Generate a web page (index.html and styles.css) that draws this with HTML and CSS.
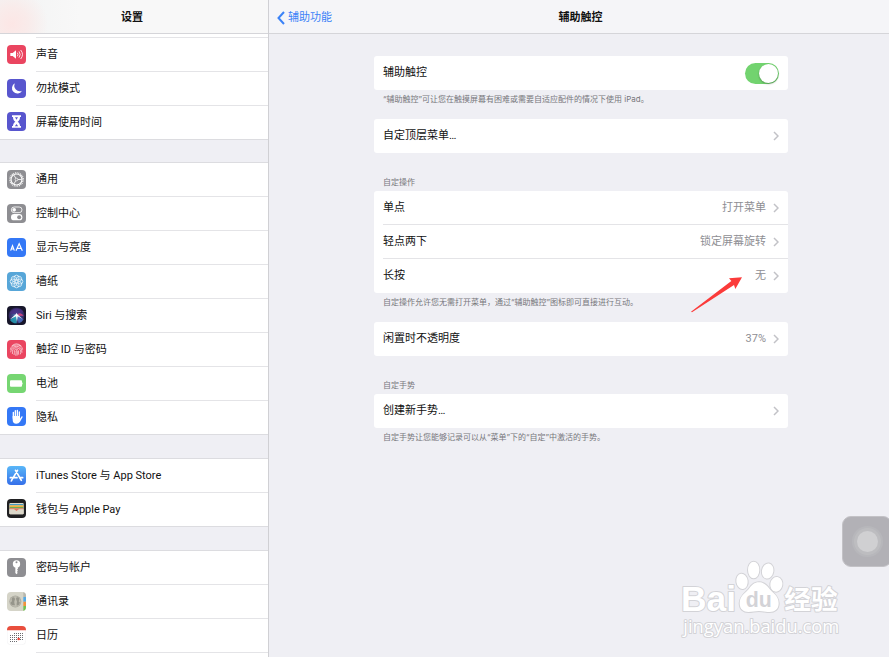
FILE: index.html
```html
<!DOCTYPE html>
<html lang="zh-CN">
<head>
<meta charset="utf-8">
<meta name="viewport" content="width=device-width, initial-scale=1">
<title>设置</title>
<link rel="stylesheet" href="styles.css">
</head>
<body>
<div class="app">
  <nav class="sidebar" aria-label="设置">
    <header class="bar bar-side"><h1 class="bar-title">设置</h1></header>
    <div class="list">
      <div class="group group-first">
        <div class="row-rest"></div>
        <a class="item" href="#"><svg class="icon" viewBox="0 0 57 57"><rect width="57" height="57" rx="12" fill="#ea4560"/><path d="M10 24h7l10-8v25l-10-8h-7z" fill="#fff"/><path d="M31 23q4 5.500 0 11M36 19q7 9.500 0 19M41 15q11 13.500 0 27" fill="none" stroke="#fff" stroke-width="2.500"/></svg><span class="item-label">声音</span></a>
        <a class="item" href="#"><svg class="icon" viewBox="0 0 57 57"><rect width="57" height="57" rx="12" fill="#5856ce"/><path d="M24 13A16 16 0 1 0 45 35 16 16 0 0 1 24 13z" fill="#fff"/></svg><span class="item-label">勿扰模式</span></a>
        <a class="item" href="#"><svg class="icon" viewBox="0 0 57 57"><rect width="57" height="57" rx="12" fill="#5856ce"/><path d="M15 10h27v5h-3c0 8-3 11-7 14 4 3 7 7 7 13h3v5H15v-5h3c0-6 3-10 7-13-4-3-7-6-7-14h-3z" fill="#fff"/><path d="M24 16h9l-4.500 7zM28.500 36l5 7h-10z" fill="#5856ce"/></svg><span class="item-label">屏幕使用时间</span></a>
      </div>
      <div class="group">
        <a class="item" href="#"><svg class="icon" viewBox="0 0 57 57"><rect width="57" height="57" rx="12" fill="#8e8e92"/><g fill="none" stroke="#fff"><circle cx="28.500" cy="28.500" r="20" stroke-width="4" stroke-dasharray="2.600 2.640"/><circle cx="28.500" cy="28.500" r="16.500" stroke-width="3.500"/><circle cx="28.500" cy="28.500" r="4" stroke-width="2"/><path d="M32.500 28.500H44M26.500 25l-6-10M26.500 32l-6 10" stroke-width="2.500"/></g></svg><span class="item-label">通用</span></a>
        <a class="item" href="#"><svg class="icon" viewBox="0 0 57 57"><rect width="57" height="57" rx="12" fill="#8e8e92"/><rect x="13" y="9" width="32" height="17" rx="8.500" fill="none" stroke="#fff" stroke-width="2.500"/><circle cx="21.500" cy="17.500" r="5.500" fill="#fff"/><rect x="12" y="30" width="34" height="19" rx="9.500" fill="#fff"/><circle cx="36.500" cy="39.500" r="6" fill="#8e8e92"/></svg><span class="item-label">控制中心</span></a>
        <a class="item" href="#"><svg class="icon" viewBox="0 0 57 57"><rect width="57" height="57" rx="12" fill="#3478f6"/><path d="M11 38l5.500-15L22 38M13 33h7M27 38l9.500-21L46 38M30 31h13" fill="none" stroke="#fff" stroke-width="3.500"/></svg><span class="item-label">显示与亮度</span></a>
        <a class="item" href="#"><svg class="icon" viewBox="0 0 57 57"><rect width="57" height="57" rx="12" fill="#57a6d8"/><g fill="none" stroke="#fff" stroke-width="2"><circle cx="28.500" cy="17" r="7.500"/><circle cx="36.500" cy="20.500" r="7.500"/><circle cx="40" cy="28.500" r="7.500"/><circle cx="36.500" cy="36.500" r="7.500"/><circle cx="28.500" cy="40" r="7.500"/><circle cx="20.500" cy="36.500" r="7.500"/><circle cx="17" cy="28.500" r="7.500"/><circle cx="20.500" cy="20.500" r="7.500"/></g></svg><span class="item-label">墙纸</span></a>
        <a class="item" href="#"><svg class="icon" viewBox="0 0 57 57"><defs><radialGradient id="siri"><stop offset="0" stop-color="#7dc4d8"/><stop offset=".45" stop-color="#3d4a8c"/><stop offset=".85" stop-color="#372c66"/><stop offset="1" stop-color="#1b1933"/></radialGradient></defs><rect width="57" height="57" rx="12" fill="#17162a"/><circle cx="28.500" cy="28.500" r="25" fill="url(#siri)"/><path d="M8 22C16 6 38 3 49 18L30 26z" fill="#4b2f86" opacity=".8"/><path d="M29 27L9 42q8 11 20 10z" fill="#1eb5c0" opacity=".7"/><path d="M29 27l6 25q10-2 15-12z" fill="#4f7ad0" opacity=".7"/><path d="M32 24q10-7 18 5l-16 1z" fill="#e3427e" opacity=".8"/><path d="M29 21l3 5 15 13-15-8-2 17-3-17-18 9 16-14z" fill="#fff"/></svg><span class="item-label">Siri 与搜索</span></a>
        <a class="item" href="#"><svg class="icon" viewBox="0 0 57 57"><rect width="57" height="57" rx="12" fill="#ea4560"/><g fill="none" stroke="#fff" stroke-width="1.800"><path d="M14 18q14-13 29 0M10 29q2-13 18-14t19 14M11 37q2-18 17-18 17 0 17 19M16 42q1-8 1-12 3-8 11-7 12 1 13 10 1 5-1 10M21 45q2-8 1-14 3-6 9-3 5 2 4 16M26 47q2-8 1-15 3-1 4 3 0 8-1 12"/></g></svg><span class="item-label">触控 ID 与密码</span></a>
        <a class="item" href="#"><svg class="icon" viewBox="0 0 57 57"><rect width="57" height="57" rx="12" fill="#76d672"/><rect x="9" y="19" width="36" height="19" rx="3" fill="#fff"/><path d="M46 24q4 4.500 0 9z" fill="#fff"/></svg><span class="item-label">电池</span></a>
        <a class="item" href="#"><svg class="icon" viewBox="0 0 57 57"><rect width="57" height="57" rx="12" fill="#3478f6"/><path d="M19 34V16M25 31V11M31 31V10M37 32V15" stroke="#fff" stroke-width="4" stroke-linecap="round"/><path d="M17 27h22v8l5-7q3-1 3 2l-8 14q-4 6-11 6-11 0-11-12z" fill="#fff"/></svg><span class="item-label">隐私</span></a>
      </div>
      <div class="group">
        <a class="item" href="#"><svg class="icon" viewBox="0 0 57 57"><defs><linearGradient id="store" x2="0" y2="1"><stop stop-color="#59b7f8"/><stop offset="1" stop-color="#356fe9"/></linearGradient></defs><rect width="57" height="57" rx="12" fill="url(#store)"/><path d="M31.500 13L17 38M25.500 13L43 43M10 35h20M38 35h9M15 41l-2 4" fill="none" stroke="#fff" stroke-width="5" stroke-linecap="round"/></svg><span class="item-label">iTunes Store 与 App Store</span></a>
        <a class="item" href="#"><svg class="icon" viewBox="0 0 57 57"><rect width="57" height="57" rx="12" fill="#202022"/><rect x="7" y="12" width="43" height="34" rx="3" fill="#ddd8c9"/><path d="M8 15h41v4H8z" fill="#459ac4"/><path d="M8 19h41v5H8z" fill="#edb23e"/><path d="M8 24h41v4H8z" fill="#6cad57"/><path d="M8 28h41v4H8z" fill="#e66e58"/><path d="M7 31h14q2 0 3 2 4 4 9 0 1-2 3-2h14v12q0 3-3 3H10q-3 0-3-3z" fill="#dcd8ca"/><path d="M22 31h13l-6.500 5z" fill="#e66e58"/></svg><span class="item-label">钱包与 Apple Pay</span></a>
      </div>
      <div class="group">
        <a class="item" href="#"><svg class="icon" viewBox="0 0 57 57"><rect width="57" height="57" rx="12" fill="#8e8e92"/><circle cx="28.500" cy="18" r="11" fill="#fff"/><circle cx="28.500" cy="13" r="3" fill="#8e8e92"/><path d="M25 27h7l1 5-3 3 3 3-3 3 2 4-3.500 4-3.500-4z" fill="#fff"/></svg><span class="item-label">密码与帐户</span></a>
        <a class="item" href="#"><svg class="icon" viewBox="0 0 57 57"><defs><clipPath id="book"><rect width="57" height="57" rx="12"/></clipPath></defs><g clip-path="url(#book)"><path d="M0 0h57v57H0z" fill="#d5d4c8"/><path d="M49 0h8v15h-8z" fill="#b8b7ad"/><path d="M49 15h8v14h-8z" fill="#53a9e4"/><path d="M49 29h8v13h-8z" fill="#f0923d"/><path d="M49 42h8v15h-8z" fill="#71c151"/><circle cx="25" cy="28.500" r="18" fill="#aaa99e"/><circle cx="25" cy="28.500" r="15.500" fill="#c0beb2"/><path d="M14 22q0-6 5-6t5 6l-2 6v5l2 7h-9q-5-5-4-9l4-3zM27 20q1-5 6-4 5 1 4 7l-2 5 4 4q-3 9-10 9v-7l1-5z" fill="#96958b"/></g></svg><span class="item-label">通讯录</span></a>
        <a class="item" href="#"><svg class="icon" viewBox="0 0 57 57"><rect x=".5" y=".5" width="56" height="56" rx="12" fill="#fff" stroke="#e5e5e7"/><path d="M0 12Q0 0 12 0h33q12 0 12 12v1H0z" fill="#e94e3d"/><path d="M21 22.500h27M9 28.500h39M9 34.500h39M9 40.500h39M9 46.500h21" stroke="#6c6c70" stroke-width="3" stroke-dasharray="3 3"/><circle cx="35" cy="39" r="4" fill="#ee4438"/></svg><span class="item-label">日历</span></a>
        <a class="item" href="#"><span class="icon"></span><span class="item-label"></span></a>
      </div>
    </div>
  </nav>

  <main class="detail">
    <header class="bar bar-detail">
      <a class="back" href="#"><svg class="back-arrow" viewBox="0 0 8 14"><path d="M7 1L1.500 7 7 13" fill="none" stroke="currentColor" stroke-width="2"/></svg>辅助功能</a>
      <h2 class="bar-title">辅助触控</h2>
    </header>
    <div class="content">
      <section class="section">
        <div class="card">
          <div class="cell"><label for="assistive">辅助触控</label><input class="switch" id="assistive" type="checkbox" role="switch" checked></div>
        </div>
        <p class="note">“辅助触控”可让您在触摸屏幕有困难或需要自适应配件的情况下使用 iPad。</p>
      </section>
      <section class="section">
        <div class="card">
          <button class="cell" type="button"><span>自定顶层菜单…</span><svg class="chevron" viewBox="0 0 6 10"><path d="M1 1l4 4-4 4"/></svg></button>
        </div>
      </section>
      <section class="section">
        <h3 class="caption">自定操作</h3>
        <div class="card">
          <button class="cell" type="button"><span>单点</span><span class="value">打开菜单</span><svg class="chevron" viewBox="0 0 6 10"><path d="M1 1l4 4-4 4"/></svg></button>
          <button class="cell" type="button"><span>轻点两下</span><span class="value">锁定屏幕旋转</span><svg class="chevron" viewBox="0 0 6 10"><path d="M1 1l4 4-4 4"/></svg></button>
          <button class="cell" type="button"><span>长按</span><span class="value">无</span><svg class="chevron" viewBox="0 0 6 10"><path d="M1 1l4 4-4 4"/></svg></button>
          <svg class="pointer" viewBox="0 0 153 108"><path d="M153 1l-20 35-4-12L3 106l-3-2L121 12l-7-8z" fill="#fb3b3a"/></svg>
        </div>
        <p class="note">自定操作允许您无需打开菜单，通过“辅助触控”图标即可直接进行互动。</p>
      </section>
      <section class="section">
        <div class="card">
          <button class="cell" type="button"><span>闲置时不透明度</span><span class="value">37%</span><svg class="chevron" viewBox="0 0 6 10"><path d="M1 1l4 4-4 4"/></svg></button>
        </div>
      </section>
      <section class="section">
        <h3 class="caption">自定手势</h3>
        <div class="card">
          <button class="cell" type="button"><span>创建新手势…</span><svg class="chevron" viewBox="0 0 6 10"><path d="M1 1l4 4-4 4"/></svg></button>
        </div>
        <p class="note">自定手势让您能够记录可以从“菜单”下的“自定”中激活的手势。</p>
      </section>
    </div>
  </main>

  <button class="touch" type="button" aria-label="辅助触控"><span class="touch-dot"></span></button>

  <svg class="mark" viewBox="60 180 492 240">
    <g class="mark-shape">
      <text class="mark-bai" x="63" y="332">Bai</text>
      <ellipse cx="246" cy="244" rx="17" ry="23" transform="rotate(-8 246 244)"/>
      <ellipse cx="281" cy="210" rx="17" ry="25"/>
      <ellipse cx="323" cy="213" rx="17" ry="23" transform="rotate(10 323 213)"/>
      <ellipse cx="349" cy="253" rx="18" ry="22" transform="rotate(10 349 253)"/>
      <path d="M297 247c-14 0-22 8-29 18-8 12-29 21-29 45 0 18 12 26 26 26 12 0 20-3 32-3s20 3 32 3c15 0 27-8 27-26 0-24-21-33-29-45-7-10-16-18-30-18z"/>
      <text class="mark-cn" x="373" y="328">经验</text>
      <text class="mark-url" x="70" y="398">jingyan.baidu.com</text>
    </g>
    <text class="mark-du" x="257" y="322">du</text>
  </svg>
</div>
</body>
</html>
```
FILE: styles.css
```css
* { box-sizing: border-box; }

body {
  margin: 0;
  font-family: Roboto, "Noto Sans CJK SC", sans-serif;
  font-size: 11px;
  line-height: 16px;
  color: #111;
  background: #efeff4;
}

h1, h2, h3, p { margin: 0; font-size: inherit; font-weight: inherit; }
a { color: inherit; text-decoration: none; }

.app {
  position: relative;
  display: grid;
  grid-template-columns: 269px 1fr;
  height: 100vh;
  overflow: hidden;
}

.bar {
  display: grid;
  align-items: center;
  height: 34px;
  padding-top: 2px;
  border-bottom: 1px solid #d5d5d9;
  background: #f5f5f8;
}
.bar-title { font-weight: 700; text-align: center; }

.sidebar {
  min-height: 0;
  overflow: hidden;
  border-right: 1px solid #d0d0d4;
}
.bar-side {
  padding-right: 4px;
  background: radial-gradient(circle at 12px 24px, #fce6e5 0, #f9ebea 16px, transparent 36px), linear-gradient(90deg, #f2f3f3, #f8f8f8 80px);
}

.group {
  margin-bottom: 23px;
  border-top: 1px solid #dcdce0;
  background: #fff;
}
.group-first {
  margin-bottom: 22px;
  border-top: 0;
}
.row-rest {
  height: 4px;
  margin-left: 36px;
  border-bottom: 1px solid #e4e4e7;
}

.item {
  display: flex;
  align-items: center;
  gap: 10px;
  height: 34px;
  padding-left: 7px;
}
.item:last-child { border-bottom: 1px solid #dcdce0; }
.icon {
  flex: none;
  width: 19px;
  height: 19px;
  margin-bottom: 2px;
}
.item-label {
  flex: 1;
  height: 34px;
  line-height: 34px;
  border-bottom: 1px solid #e4e4e7;
  white-space: nowrap;
}
.item:last-child .item-label { border-bottom: 0; }

.bar-detail {
  grid-template-columns: 1fr auto 1fr;
  padding-right: 5px;
  padding-left: 8px;
}
.back {
  display: flex;
  align-items: center;
  gap: 3px;
  color: #3b82f7;
}
.back-arrow { width: 8px; height: 14px; }

.content {
  display: grid;
  padding: 22px 101px 22px 105px;
}
.section { padding-bottom: 29px; }
.section:has(.note) { padding-bottom: 12px; }

.card {
  position: relative;
  border-radius: 3px;
  background: #fff;
}
.cell {
  position: relative;
  display: flex;
  align-items: center;
  gap: 7px;
  width: 100%;
  height: 34px;
  padding: 0 9px;
  border: 0;
  background: none;
  font: inherit;
  color: inherit;
  text-align: left;
}
.cell > :first-child { flex: 1; }
.cell + .cell::before {
  content: "";
  position: absolute;
  inset: -1px 0 auto 9px;
  height: 1px;
  background: #e4e4e7;
}
.value { color: #8e8e93; }
.chevron {
  width: 6px;
  height: 10px;
  fill: none;
  stroke: #c2c2c7;
  stroke-width: 1.5;
}

.note, .caption {
  padding: 0 9px;
  font-family: Inter, "Noto Sans CJK SC", sans-serif;
  font-size: 8px;
  color: #77777c;
}
.note { padding-top: 1px; }
.caption {
  margin-top: -8px;
  padding-bottom: 1px;
}

.switch {
  appearance: none;
  width: 34px;
  height: 21px;
  margin: 0;
  padding: 1px;
  border-radius: 11px;
  background: #ddd;
}
.switch::before {
  content: "";
  display: block;
  width: 19px;
  height: 19px;
  border-radius: 50%;
  background: #fff;
  box-shadow: 0 1px 2px rgba(0, 0, 0, .3);
}
.switch:checked { background: #72d36f; }
.switch:checked::before { margin-left: auto; }

.pointer {
  position: absolute;
  right: 46px;
  bottom: -20px;
  width: 51px;
  height: 36px;
  pointer-events: none;
}

.touch {
  position: absolute;
  right: -3px;
  bottom: 90px;
  display: grid;
  place-items: center;
  width: 50px;
  height: 51px;
  padding: 0;
  border: 1px solid #c3c2c6;
  border-radius: 9px;
  background: #b2b1b6;
}
.touch-dot {
  width: 21px;
  height: 21px;
  border-radius: 50%;
  background: #d0d0d2;
  box-shadow: 0 0 0 3px #bdbdc0, 0 0 0 5px #b7b7bb;
}

.mark {
  position: absolute;
  right: 45px;
  bottom: 17px;
  width: 164px;
  height: 80px;
  pointer-events: none;
}
.mark-shape {
  fill: #fff;
  stroke: #d3d3d7;
  stroke-width: 6px;
  stroke-linejoin: round;
  paint-order: stroke;
}
.mark-bai { font: 700 106px "Liberation Sans", sans-serif; }
.mark-cn { font: 700 80px "Noto Sans CJK SC", sans-serif; }
.mark-url { font: 400 55px "Open Sans", sans-serif; }
.mark-du { font: 700 64px "Liberation Sans", sans-serif; fill: #d3d3d7; }
```
